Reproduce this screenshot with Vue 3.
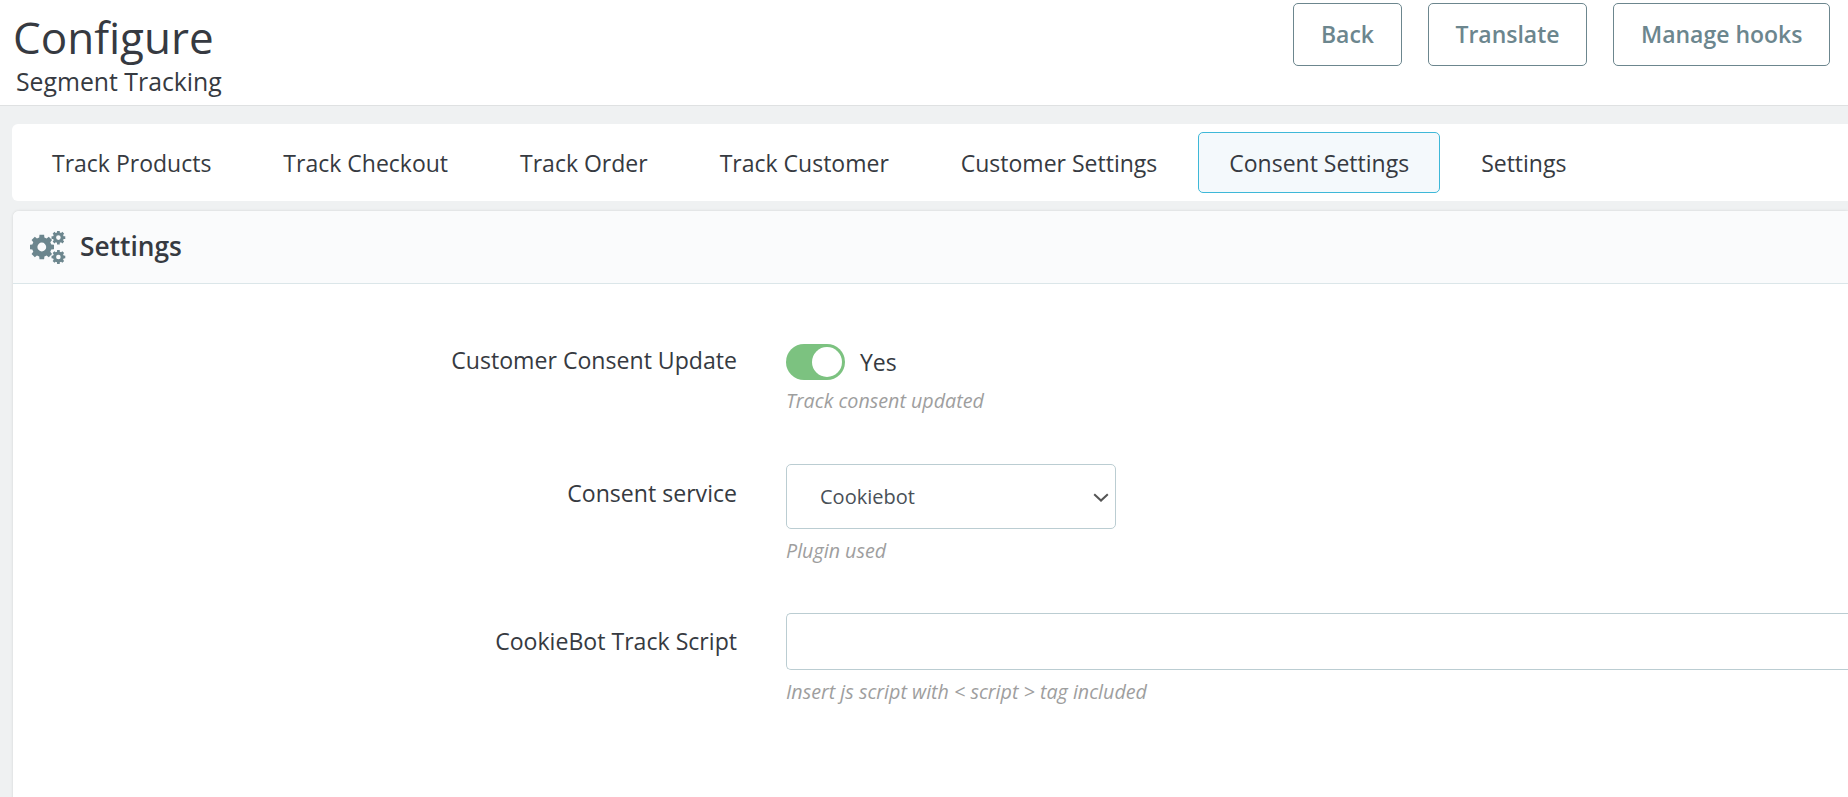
<script setup>
import { ref } from 'vue';

const tabs = ['Track Products', 'Track Checkout', 'Track Order', 'Track Customer', 'Customer Settings', 'Consent Settings', 'Settings'];
const activeTab = ref('Consent Settings');
const service = ref('Cookiebot');
const trackScript = ref('');

// gear outline for the panel heading icon
const gear = (cx, cy, outer, inner, hole, teeth) => {
  let d = '';
  const step = (Math.PI * 2) / teeth;
  for (let i = 0; i < teeth; i++) {
    const a = i * step;
    const pts = [
      [inner, a - step * 0.34],
      [outer, a - step * 0.24],
      [outer, a + step * 0.24],
      [inner, a + step * 0.34]
    ];
    pts.forEach(([r, t], j) => {
      const x = (cx + r * Math.cos(t)).toFixed(2);
      const y = (cy + r * Math.sin(t)).toFixed(2);
      d += (i === 0 && j === 0 ? 'M' : 'L') + x + ' ' + y;
    });
  }
  d += `Z M${cx - hole} ${cy}a${hole} ${hole} 0 1 0 ${hole * 2} 0a${hole} ${hole} 0 1 0 ${-hole * 2} 0Z`;
  return d;
};
const cogs = [gear(11.8, 16, 12.4, 9.8, 4.4, 8), gear(28.4, 6.6, 7, 5.4, 2.3, 8), gear(28.4, 26, 7, 5.4, 2.3, 8)].join(' ');
</script>

<template>
  <div class="page">
    <header class="page-head">
      <div class="titles">
        <h1>Configure</h1>
        <div class="subtitle">Segment Tracking</div>
      </div>
      <div class="head-actions">
        <button class="head-btn">Back</button>
        <button class="head-btn">Translate</button>
        <button class="head-btn">Manage hooks</button>
      </div>
    </header>

    <div class="content">
      <nav class="tabs">
        <a v-for="tab in tabs" :key="tab" class="tab" :class="{ active: tab === activeTab }" @click="activeTab = tab">{{ tab }}</a>
      </nav>

      <section class="panel">
        <div class="panel-head">
          <svg class="cogs" width="36" height="33" viewBox="0 0 36 33"><path :d="cogs" fill="#6c868e" fill-rule="evenodd" /></svg>
          <span class="panel-title">Settings</span>
        </div>
        <div class="panel-body">
          <div class="form-row switch-row">
            <label>Customer Consent Update</label>
            <div class="field">
              <div class="switch-line">
                <span class="switch"><span class="knob"></span></span>
                <span class="switch-text">Yes</span>
              </div>
              <p class="help">Track consent updated</p>
            </div>
          </div>
          <div class="form-row select-row">
            <label>Consent service</label>
            <div class="field">
              <div class="select-wrap">
                <select v-model="service">
                  <option>Cookiebot</option>
                </select>
                <svg class="chevron" width="16" height="9" viewBox="0 0 16 9"><path d="M1.2 1.2L8 7.6l6.8-6.4" fill="none" stroke="#555" stroke-width="2" /></svg>
              </div>
              <p class="help plugin-help">Plugin used</p>
            </div>
          </div>
          <div class="form-row input-row">
            <label>CookieBot Track Script</label>
            <div class="field">
              <input type="text" v-model="trackScript" />
              <p class="help script-help">Insert js script with &lt; script &gt; tag included</p>
            </div>
          </div>
        </div>
      </section>
    </div>
  </div>
</template>

<style>
html, body { margin: 0; background: #eff1f2; overflow: hidden; }
</style>

<style scoped>
.page {
  height: 797px;
  overflow: hidden;
  font-family: "Open Sans", "Noto Sans", sans-serif;
  color: #363a41;
}
.page-head {
  height: 105px;
  background: #fff;
  border-bottom: 1px solid #dfe1e2;
  display: flex;
  justify-content: space-between;
  align-items: flex-start;
}
.titles { padding-left: 13px; }
h1 {
  margin: 0;
  font-size: 44px;
  font-weight: 400;
  line-height: 61px;
  padding-top: 7px;
}
.subtitle { font-size: 24.8px; line-height: 28px; margin: -1px 0 0 3px; }
.head-actions {
  display: flex;
  gap: 26.4px;
  padding: 3px 18px 0 0;
}
.head-btn {
  height: 63px;
  padding: 0 26.5px 2px;
  background: #fff;
  border: 1px solid #6c868e;
  border-radius: 5px;
  color: #6c868e;
  font-family: inherit;
  font-size: 23px;
  font-weight: 600;
}
.content { padding: 18px 0 0 12px; }
.tabs {
  height: 77px;
  background: #fff;
  border-radius: 6px 0 0 6px;
  display: flex;
  align-items: center;
  gap: 10px;
  padding-left: 9px;
}
.tab {
  height: 61px;
  box-sizing: border-box;
  padding: 0 30px;
  display: flex;
  align-items: center;
  border: 1px solid transparent;
  border-radius: 5px;
  font-size: 23px;
  cursor: pointer;
}
.tab.active {
  background: #f4f9fc;
  border-color: #3eb8d8;
}
.panel {
  margin: 10px 0 0 1px;
  background: #fff;
  border-radius: 6px 0 0 0;
  box-shadow: 0 0 3px rgba(0, 0, 0, 0.12);
  height: 640px;
}
.panel-head {
  height: 73px;
  box-sizing: border-box;
  background: #fafbfc;
  border-bottom: 1px solid #dbe6e9;
  border-radius: 6px 0 0 0;
  display: flex;
  align-items: center;
  padding-left: 17px;
  font-size: 26.3px;
  font-weight: 600;
}
.panel-title { padding-bottom: 2px; }
.cogs { margin-right: 14px; }
.form-row {
  display: grid;
  grid-template-columns: 724px 1fr;
  column-gap: 49px;
}
.form-row label {
  text-align: right;
  font-size: 23.1px;
  line-height: 30px;
}
.switch-row { padding-top: 60px; }
.switch-row label { padding-top: 1px; }
.select-row { padding-top: 50px; }
.input-row { padding-top: 49px; }
.select-row label { padding-top: 14px; }
.input-row label { padding-top: 13px; }
.switch-line { display: flex; align-items: center; height: 36px; }
.switch {
  width: 59px;
  height: 36px;
  border-radius: 18px;
  background: #7cc280;
  display: block;
  position: relative;
}
.knob {
  position: absolute;
  right: 3px;
  top: 3px;
  width: 30px;
  height: 30px;
  border-radius: 50%;
  background: #fff;
}
.switch-text { font-size: 23px; margin-left: 15px; }
.help {
  margin: 8px 0 0;
  font-size: 19.7px;
  line-height: 26px;
  font-style: italic;
  color: #9e9e9e;
}
.plugin-help { margin-top: 9px; }
.script-help { margin-top: 9px; }
.select-wrap { position: relative; width: 330px; }
.chevron {
  position: absolute;
  right: 7px;
  top: 29px;
  pointer-events: none;
}
select {
  display: block;
  width: 330px;
  height: 65px;
  box-sizing: border-box;
  padding: 0 0 0 33px;
  appearance: none;
  background: #fff;
  border: 1px solid #bbcdd2;
  border-radius: 5px;
  color: #495057;
  font-family: inherit;
  font-size: 20px;
}
input {
  display: block;
  width: 100%;
  height: 57px;
  box-sizing: border-box;
  border: 1px solid #bbcdd2;
  border-right: 0;
  border-radius: 5px 0 0 5px;
  background: #fff;
  font-family: inherit;
  font-size: 20px;
}
</style>
